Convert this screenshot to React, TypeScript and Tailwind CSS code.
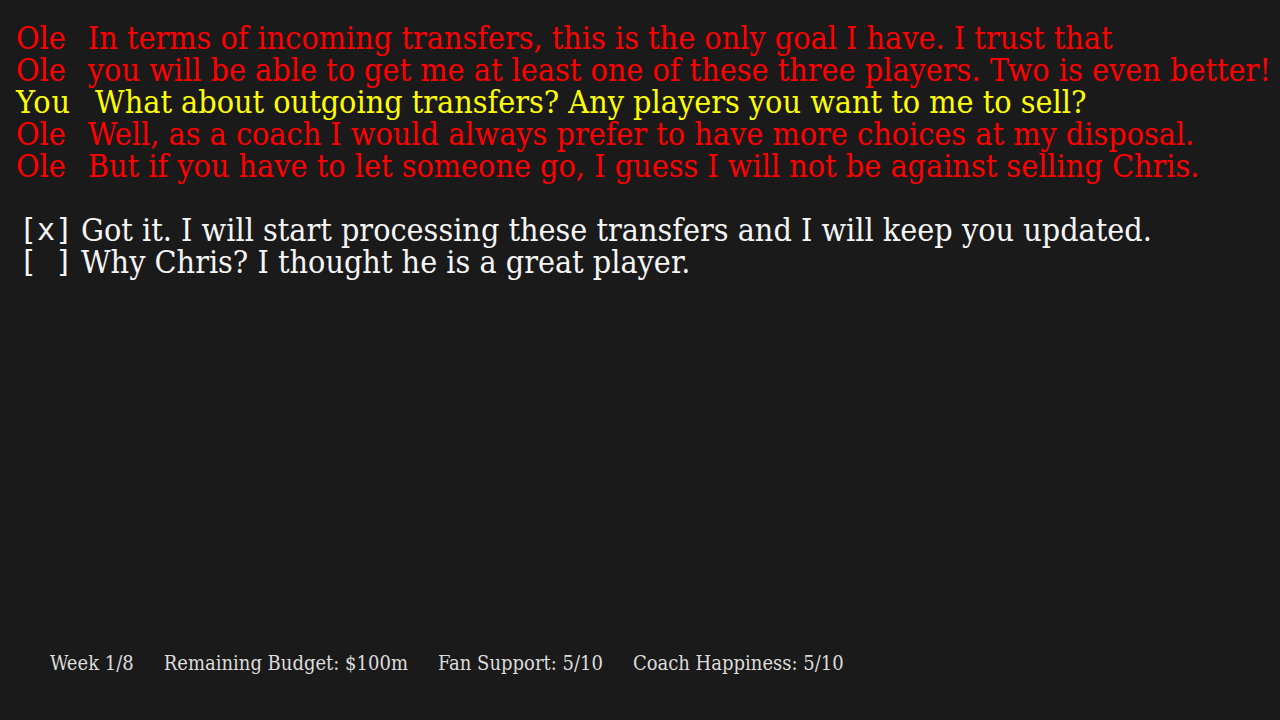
const lines = [
  { who: "Ole", text: "In terms of incoming transfers, this is the only goal I have. I trust that", you: false },
  { who: "Ole", text: "you will be able to get me at least one of these three players. Two is even better!", you: false },
  { who: "You", text: "What about outgoing transfers? Any players you want to me to sell?", you: true },
  { who: "Ole", text: "Well, as a coach I would always prefer to have more choices at my disposal.", you: false },
  { who: "Ole", text: "But if you have to let someone go, I guess I will not be against selling Chris.", you: false },
];

const options = [
  { mark: "[x]", text: "Got it. I will start processing these transfers and I will keep you updated." },
  { mark: "[ ]", text: "Why Chris? I thought he is a great player." },
];

const App = () => {
  return (
    <div className="w-[1280px] h-[720px] bg-[#1a1a1a] flex flex-col justify-between font-['DejaVu_Serif_Condensed','DejaVu_Serif',serif] [font-stretch:condensed]">
      <div className="pt-[22px] pl-[16px] text-[32px] leading-[32px] whitespace-pre">
        {lines.map((l, i) => (
          <div key={i} className={l.you ? "flex text-[#ffff00]" : "flex text-[#ff0000]"}>
            <span className={l.you ? "tracking-[1px]" : ""}>{l.who}</span>
            <span className={l.you ? "ml-[24px]" : "ml-[22px]"}>{l.text}</span>
          </div>
        ))}
        <div className="h-[32px]" />
        {options.map((o, i) => (
          <div key={i} className="text-[#f5f5f5] flex">
            <span className="font-['DejaVu_Sans_Mono',monospace] text-[30px] pl-[3px] w-[65px] shrink-0">{o.mark}</span>
            <span>{o.text}</span>
          </div>
        ))}
      </div>
      <div className="pl-[50px] pb-[42px] flex gap-[30px] text-[20px] text-[#dddddd]">
        <span>Week 1/8</span>
        <span>Remaining Budget: $100m</span>
        <span>Fan Support: 5/10</span>
        <span>Coach Happiness: 5/10</span>
      </div>
    </div>
  );
};

export default App;
